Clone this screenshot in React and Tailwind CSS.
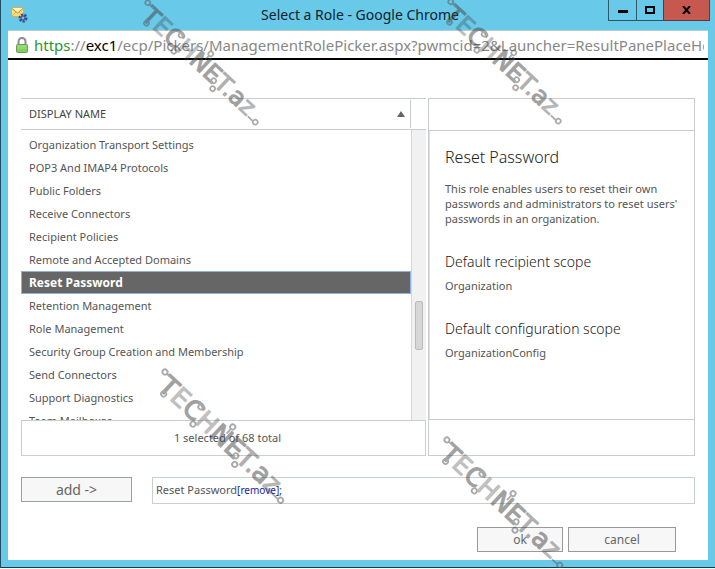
import React, { useState } from "react";

const roles = [
  "Organization Transport Settings",
  "POP3 And IMAP4 Protocols",
  "Public Folders",
  "Receive Connectors",
  "Recipient Policies",
  "Remote and Accepted Domains",
  "Reset Password",
  "Retention Management",
  "Role Management",
  "Security Group Creation and Membership",
  "Send Connectors",
  "Support Diagnostics",
  "Team Mailboxes",
];

const MailIcon = () => (
  <svg width="18" height="18" viewBox="0 0 18 18" aria-hidden="true">
    <rect x="1.5" y="2.5" width="12" height="9" fill="#f9dc7c" stroke="#d9ae50" />
    <path d="M1.5 3l6 5 6-5" fill="#fff3c0" stroke="#b98a30" />
    <path d="M2 11l4-4M13 11L9 7" stroke="#dcb45a" fill="none" />
    <circle cx="13" cy="13" r="3" fill="#8fb0de" stroke="#34508c" strokeWidth="3" strokeDasharray="2 1" />
    <circle cx="13" cy="13" r="2" fill="#8fb0de" stroke="#34508c" />
  </svg>
);

const LockIcon = () => (
  <svg width="12" height="16" viewBox="0 0 12 16" className="shrink-0" aria-hidden="true">
    <path d="M2.5 8V4.5a3.5 3.5 0 0 1 7 0V8" fill="none" stroke="#8b8f8b" strokeWidth="2" />
    <rect x="0.5" y="7.5" width="11" height="8" rx="1" fill="#7fcf5c" stroke="#6a9f55" />
    <path d="M1.5 9h9M1.5 11h9" stroke="#a9e38b" />
  </svg>
);

const Stamp = ({ className, size }) => (
  <svg
    width={size}
    height={size}
    viewBox="0 0 130 130"
    className={`absolute pointer-events-none overflow-visible ${className}`}
    aria-hidden="true"
  >
    <g transform="translate(4 4) rotate(43)" opacity="0.5">
      <text
        x="5"
        y="17"
        fontFamily="DejaVu Sans, sans-serif"
        fontSize="26"
        fill="#444"
        stroke="#444"
        strokeWidth="1.2"
        strokeLinejoin="round"
      >
        T<tspan fillOpacity="0.6" strokeOpacity="0.5">E</tspan>C<tspan fillOpacity="0.6" strokeOpacity="0.5">H</tspan>NE<tspan fillOpacity="0.8" strokeOpacity="0.7">T.</tspan>a<tspan fillOpacity="0.7" strokeOpacity="0.6">z</tspan>
      </text>
      <g fill="none" stroke="#555" strokeWidth="1.8">
        <circle cx="0" cy="0" r="2.6" />
        <path d="M2.5 0h6" />
        <circle cx="14" cy="17" r="2.6" />
        <circle cx="50" cy="1" r="2.6" />
        <circle cx="56" cy="19" r="2.6" />
        <circle cx="87" cy="-6" r="2.6" />
        <path d="M87 -3v6" />
        <circle cx="109" cy="13" r="2.6" />
        <circle cx="114" cy="20" r="2.6" />
        <circle cx="172" cy="15" r="2.6" />
        <path d="M162 16h7" />
      </g>
    </g>
  </svg>
);

const TitleBar = () => (
  <div className="flex h-[30px] pl-[9px] pr-[5px]">
    <div className="flex-1 pt-[5px]">
      <MailIcon />
    </div>
    <h1 className="text-[14px] leading-[30px] text-[#10222b]">Select a Role - Google Chrome</h1>
    <div className="flex flex-1 items-start justify-end">
      <button aria-label="Minimize" className="flex h-[21px] w-[29px] items-center justify-center border border-t-0 border-[#2d5866]">
        <svg width="10" height="10"><rect y="5" width="10" height="3" fill="#000" /></svg>
      </button>
      <button aria-label="Maximize" className="flex h-[21px] w-[26px] items-center justify-center border-b border-[#2d5866]">
        <svg width="10" height="8"><rect x="1" y="1" width="8" height="6" fill="none" stroke="#000" strokeWidth="2" /></svg>
      </button>
      <button aria-label="Close" className="flex h-[21px] w-[47px] items-center justify-center border border-t-0 border-[#5c3a3c] bg-[#c6594f]">
        <svg width="10" height="8"><path d="M1 0l7 8M8 0L1 8" stroke="#000" strokeWidth="2" /></svg>
      </button>
    </div>
  </div>
);

const RoleList = ({ selected, onSelect }) => (
  <div className="flex flex-col">
    <div className="flex h-[322px] overflow-hidden">
      <table className="h-fit flex-1 border-separate border-spacing-0 text-left">
        <thead>
          <tr>
            <th className="p-0 pb-[3px] font-normal">
              <div className="border-y border-[#c8cccf] py-px">
                <button className="flex h-7 w-full items-center justify-between border-r border-[#c8cccf] pr-[5px] pl-2 text-[11px] text-[#444]">
                  DISPLAY NAME
                  <svg width="8" height="6"><path d="M4 0l4 6H0z" fill="#666" /></svg>
                </button>
              </div>
            </th>
          </tr>
        </thead>
        <tbody>
          {roles.map((role) => (
            <tr key={role} onClick={() => onSelect(role)}>
              <td
                className={
                  role === selected
                    ? "h-[23px] border border-[#8fb0e0] bg-[#666] p-0 pl-[7px] text-[12px] leading-[21px] font-bold text-white"
                    : "h-[23px] p-0 pl-2 text-[11px] leading-[23px] text-[#555]"
                }
              >
                {role}
              </td>
            </tr>
          ))}
        </tbody>
      </table>
      <div className="flex w-[15px] flex-col">
        <div className="h-8 border-y border-[#c8cccf]"></div>
        <div className="flex-1 border-l border-[#d5d7d9] bg-[#f1f1f1] px-[3px] pt-[171px]">
          <div className="h-[49px] rounded-[2px] border border-[#bbb] bg-[#d6d6d6]"></div>
        </div>
      </div>
    </div>
    <div className="h-9 border border-[#c8d0ce] pl-2 text-center text-[11px] leading-[34px] text-[#555]">
      1 selected of 68 total
    </div>
  </div>
);

const RoleDetails = ({ name }) => (
  <div className="flex flex-col border border-[#c8cccf] text-[#555]">
    <div className="h-8 border-b border-[#c8cccf]"></div>
    <div className="flex-1 border-l border-[#dcdfe0] pl-[15px] pt-[14px] pr-2">
      <h2 className="text-[16px] font-light leading-6 text-[#222]">{name}</h2>
      <p className="mt-3 text-[11px] leading-[15px]">
        This role enables users to reset their own passwords and administrators to reset users'
        passwords in an organization.
      </p>
      <h3 className="mt-6 text-[14px] font-light leading-6 text-[#222]">Default recipient scope</h3>
      <p className="mt-[2px] text-[11px] leading-5">Organization</p>
      <h3 className="mt-[21px] text-[14px] font-light leading-6 text-[#222]">Default configuration scope</h3>
      <p className="mt-[2px] text-[11px] leading-5">OrganizationConfig</p>
    </div>
    <div className="h-9 border-t border-[#c8cccf]"></div>
  </div>
);

const App = () => {
  const [selected, setSelected] = useState("Reset Password");
  const [added, setAdded] = useState("Reset Password");

  return (
    <div className="relative overflow-hidden border-l border-[#1d4f60] bg-[#68c9e8] font-['Noto_Sans','Open_Sans',sans-serif]">
      <TitleBar />
      <div className="mr-[7px] ml-[7px] bg-white">
        <div className="flex h-[30px] items-center gap-[6px] overflow-hidden border-t border-b-2 border-t-[#b9cdd4] border-b-black pr-1 pl-2">
          <LockIcon />
          <div className="overflow-hidden text-[15px] leading-[26px] whitespace-nowrap text-[#888]">
            <span className="text-[#2c962c]">https</span>://<span className="text-black">exc1</span>
            /ecp/Pickers/ManagementRolePicker.aspx?pwmcid=2&amp;Launcher=ResultPanePlaceHo
          </div>
        </div>

        <main className="px-[13px] pt-[38px] pb-2">
          <div className="grid grid-cols-[405fr_267fr] gap-[2px]">
            <RoleList selected={selected} onSelect={setSelected} />
            <RoleDetails name={selected} />
          </div>

          <div className="mt-[21px] flex items-start gap-5">
            <button
              onClick={() => setAdded(selected)}
              className="h-[25px] w-[111px] border border-[#999fa3] bg-[#f7f7f7] text-[14px] leading-[23px] text-[#666]"
            >
              add -&gt;
            </button>
            <div className="h-[27px] flex-1 border border-[#c8d0ce] pl-[3px] text-[11px] leading-[23px] text-[#555]">
              {added}
              {added && (
                <a href="#" onClick={() => setAdded("")} className="text-[10px] text-[#1c1c9c]">
                  [remove];
                </a>
              )}
            </div>
          </div>

          <div className="mt-[23px] mr-[19px] flex justify-end gap-[5px] text-[12px] leading-[23px] text-[#666]">
            <button className="h-[25px] w-[86px] border border-[#999] bg-[#f7f7f7]">ok</button>
            <button className="h-[25px] w-[108px] border border-[#999] bg-[#f7f7f7]">cancel</button>
          </div>
        </main>
      </div>
      <div className="h-2 border-b border-[#173a4a]"></div>

      <Stamp size={121} className="-top-px left-[143px]" />
      <Stamp size={121} className="-top-[2px] left-[446px]" />
      <Stamp size={130} className="top-[368px] left-[160px]" />
      <Stamp size={127} className="top-[436px] left-[442px]" />
    </div>
  );
};

export default App;
